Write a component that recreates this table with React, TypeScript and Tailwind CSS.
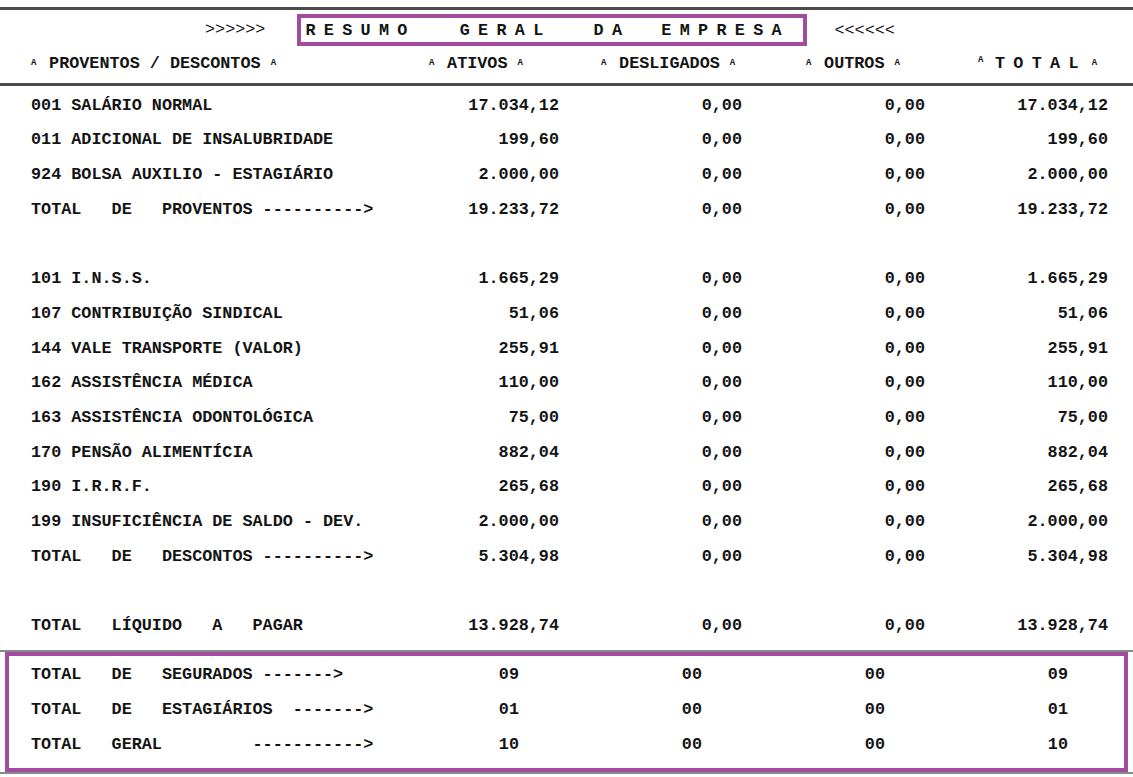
import React from "react";

// Payroll summary report ("Resumo Geral da Empresa")
type Row = {
  label: string;
  values: [string, string, string, string];
} | null;

const rows: Row[] = [
  { label: "001 SALÁRIO NORMAL", values: ["17.034,12", "0,00", "0,00", "17.034,12"] },
  { label: "011 ADICIONAL DE INSALUBRIDADE", values: ["199,60", "0,00", "0,00", "199,60"] },
  { label: "924 BOLSA AUXILIO - ESTAGIÁRIO", values: ["2.000,00", "0,00", "0,00", "2.000,00"] },
  { label: "TOTAL   DE   PROVENTOS ---------->", values: ["19.233,72", "0,00", "0,00", "19.233,72"] },
  null,
  { label: "101 I.N.S.S.", values: ["1.665,29", "0,00", "0,00", "1.665,29"] },
  { label: "107 CONTRIBUIÇÃO SINDICAL", values: ["51,06", "0,00", "0,00", "51,06"] },
  { label: "144 VALE TRANSPORTE (VALOR)", values: ["255,91", "0,00", "0,00", "255,91"] },
  { label: "162 ASSISTÊNCIA MÉDICA", values: ["110,00", "0,00", "0,00", "110,00"] },
  { label: "163 ASSISTÊNCIA ODONTOLÓGICA", values: ["75,00", "0,00", "0,00", "75,00"] },
  { label: "170 PENSÃO ALIMENTÍCIA", values: ["882,04", "0,00", "0,00", "882,04"] },
  { label: "190 I.R.R.F.", values: ["265,68", "0,00", "0,00", "265,68"] },
  { label: "199 INSUFICIÊNCIA DE SALDO - DEV.", values: ["2.000,00", "0,00", "0,00", "2.000,00"] },
  { label: "TOTAL   DE   DESCONTOS ---------->", values: ["5.304,98", "0,00", "0,00", "5.304,98"] },
  null,
  { label: "TOTAL   LÍQUIDO   A   PAGAR", values: ["13.928,74", "0,00", "0,00", "13.928,74"] },
];

const counts: { label: string; values: [string, string, string, string] }[] = [
  { label: "TOTAL   DE   SEGURADOS ------->", values: ["09", "00", "00", "09"] },
  { label: "TOTAL   DE   ESTAGIÁRIOS  ------->", values: ["01", "00", "00", "01"] },
  { label: "TOTAL   GERAL         ----------->", values: ["10", "00", "00", "10"] },
];

// tiny "A" marker used around the column headings
const Mk = () => (
  <span className="inline-block w-[8px] text-[9px] leading-none relative -top-[3px]">A</span>
);

const cols = "grid grid-cols-[345px_183px_183px_183px_183px]";

export default function App() {
  return (
    <div
      className="w-[1133px] h-[777px] bg-white text-[#141414] font-bold text-[16.8px] overflow-hidden"
      style={{ fontFamily: '"Liberation Mono", "DejaVu Sans Mono", monospace' }}
    >
      <div className="pt-[7px]">
        <div className="h-[3px] bg-[#4b4b4b]" />
      </div>

      {/* title */}
      <div className="flex items-center h-[40px] pl-[205px] whitespace-pre">
        <span className="font-normal">{">>>>>>"}</span>
        <div className="ml-[32px] w-[510px] h-[32px] border-[4px] border-[#a24b9f] flex items-center pl-[4px] pt-[2px]">
          <span className="tracking-[8.3px]">RESUMO</span>
          <span className="ml-[44px] tracking-[8.3px]">GERAL</span>
          <span className="ml-[42px] tracking-[8.3px]">DA</span>
          <span className="ml-[31px] tracking-[8.3px]">EMPRESA</span>
        </div>
        <span className="ml-[27px] font-normal pt-[2px]">{"<<<<<<"}</span>
      </div>

      {/* column headings */}
      <div className={`${cols} pl-[31px] h-[33px] pb-[6px] items-center whitespace-pre`}>
        <div>
          <Mk />{" PROVENTOS / DESCONTOS "}<Mk />
        </div>
        <div className="pl-[53px]">
          <Mk />{" ATIVOS "}<Mk />
        </div>
        <div className="pl-[42px]">
          <Mk />{" DESLIGADOS "}<Mk />
        </div>
        <div className="pl-[64px]">
          <Mk />{" OUTROS "}<Mk />
        </div>
        <div className="pl-[53px] flex items-center">
          <Mk />
          <span className="ml-[9px] tracking-[8.3px]">TOTAL</span>
          <span className="ml-[5px]"><Mk /></span>
        </div>
      </div>
      <div className="h-[3px] bg-[#4b4b4b]" />

      {/* values */}
      <div className="pt-[2px]">
        {rows.map((r, i) =>
          r ? (
            <div key={i} className={`${cols} pl-[31px] h-[34.7px] items-center whitespace-pre`}>
              <div>{r.label}</div>
              {r.values.map((v, j) => (
                <div key={j} className="text-right">{v}</div>
              ))}
            </div>
          ) : (
            <div key={i} className="h-[34.7px]" />
          )
        )}
      </div>

      <div className="mt-[7px] h-[2px] bg-[#8a8a8a]" />

      {/* headcount box */}
      <div className="mx-[5px] border-[4px] border-[#a24b9f] pt-[1px] pb-[6px]">
        {counts.map((r, i) => (
          <div
            key={i}
            className="grid grid-cols-[345px_183px_183px_183px_183px] pl-[22px] h-[35px] items-center whitespace-pre"
          >
            <div>{r.label}</div>
            {r.values.map((v, j) => (
              <div key={j} className="text-right pr-[40px]">{v}</div>
            ))}
          </div>
        ))}
      </div>
      <div className="h-[2px] bg-[#8a8a8a]" />
    </div>
  );
}
